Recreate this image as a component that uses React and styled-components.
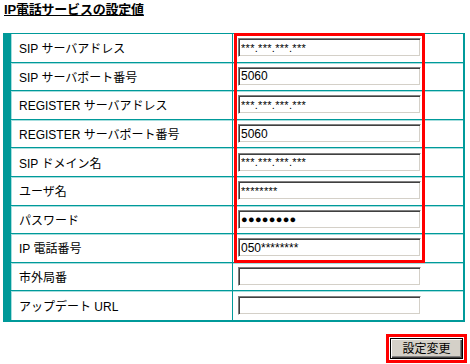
import styled, { createGlobalStyle } from "styled-components";

const GlobalStyle = createGlobalStyle`
  html, body {
    margin: 0;
    padding: 0;
    background: #ffffff;
  }
  body {
    font-family: "Liberation Sans", "Noto Sans CJK JP", sans-serif;
    color: #000000;
  }
`;

const Page = styled.div`
  width: 470px;
  height: 364px;
  box-sizing: border-box;
  padding: 2px 3px 0 3px;
`;

const Title = styled.h1`
  margin: 0 0 15px 1px;
  font-size: 13px;
  line-height: 16px;
  font-weight: bold;
  text-decoration: underline;
  letter-spacing: -0.2px;
`;

const Panel = styled.div`
  position: relative;
  width: 462px;
  box-sizing: border-box;
  border-top: 1px solid #009a9a;
  border-left: 8px solid #009999;
  border-right: 2px solid #009a9a;
  border-bottom: 2px solid #009a9a;
`;

const Row = styled.div`
  display: grid;
  grid-template-columns: 221px 1fr;
  height: 28.6px;
  box-sizing: border-box;
  border-bottom: ${(p) => (p.$last ? "none" : "1px solid #009a9a")};
  box-shadow: ${(p) => (p.$last ? "none" : "0 1px 0 #a6dede")};
`;

const Label = styled.div`
  display: flex;
  align-items: center;
  padding-left: 7px;
  font-size: 12px;
  border-left: 1px solid #a6dede;
  white-space: nowrap;
`;

const Value = styled.div`
  display: flex;
  align-items: center;
  padding-left: 5px;
  border-left: 1px solid #009a9a;
`;

const Field = styled.input`
  width: 183px;
  height: 19px;
  box-sizing: border-box;
  margin: 0;
  padding: 0 2px;
  font-family: "Liberation Sans", "Noto Sans CJK JP", sans-serif;
  font-size: ${(p) => (p.$small ? "11px" : "12px")};
  letter-spacing: ${(p) => (p.$small ? "0.3px" : "0")};
  color: #000000;
  background: #ffffff;
  border: 1px solid;
  border-color: #808080 #ffffff #ffffff #808080;
  box-shadow: inset 1px 1px #404040, inset -1px -1px #d4d0c8;
  outline: none;
`;

const Highlight = styled.div`
  position: absolute;
  left: 223px;
  top: -1px;
  width: 191px;
  height: 230px;
  box-sizing: border-box;
  border: 3px solid #ff0000;
  pointer-events: none;
`;

const Actions = styled.div`
  display: flex;
  justify-content: flex-end;
  margin-top: 12px;
`;

const ButtonFrame = styled.div`
  border: 3px solid #ff0000;
  padding: 1px;
  display: flex;
`;

const Button = styled.button`
  width: 73px;
  height: 21px;
  margin: 0;
  padding: 0;
  font-family: "Noto Sans CJK JP", sans-serif;
  font-size: 12px;
  line-height: 1;
  color: #000000;
  background: #d4d0c8;
  border: 1px solid #000000;
  box-shadow: inset 1px 1px #ffffff, inset -1px -1px #404040,
    inset -2px -2px #808080;
`;

const rows = [
  { label: "SIP サーバアドレス", value: "***.***.***.***", small: true },
  { label: "SIP サーバポート番号", value: "5060" },
  { label: "REGISTER サーバアドレス", value: "***.***.***.***", small: true },
  { label: "REGISTER サーバポート番号", value: "5060" },
  { label: "SIP ドメイン名", value: "***.***.***.***", small: true },
  { label: "ユーザ名", value: "********", small: true },
  { label: "パスワード", value: "●●●●●●●●", small: true },
  { label: "IP 電話番号", value: "050********" },
  { label: "市外局番", value: "" },
  { label: "アップデート URL", value: "" },
];

export default function App() {
  return (
    <>
      <GlobalStyle />
      <Page>
        <Title>IP電話サービスの設定値</Title>
        <Panel>
          {rows.map((row, i) => (
            <Row key={row.label} $last={i === rows.length - 1}>
              <Label>{row.label}</Label>
              <Value>
                <Field type="text" readOnly defaultValue={row.value} $small={row.small} />
              </Value>
            </Row>
          ))}
          <Highlight />
        </Panel>
        <Actions>
          <ButtonFrame>
            <Button type="button">設定変更</Button>
          </ButtonFrame>
        </Actions>
      </Page>
    </>
  );
}
